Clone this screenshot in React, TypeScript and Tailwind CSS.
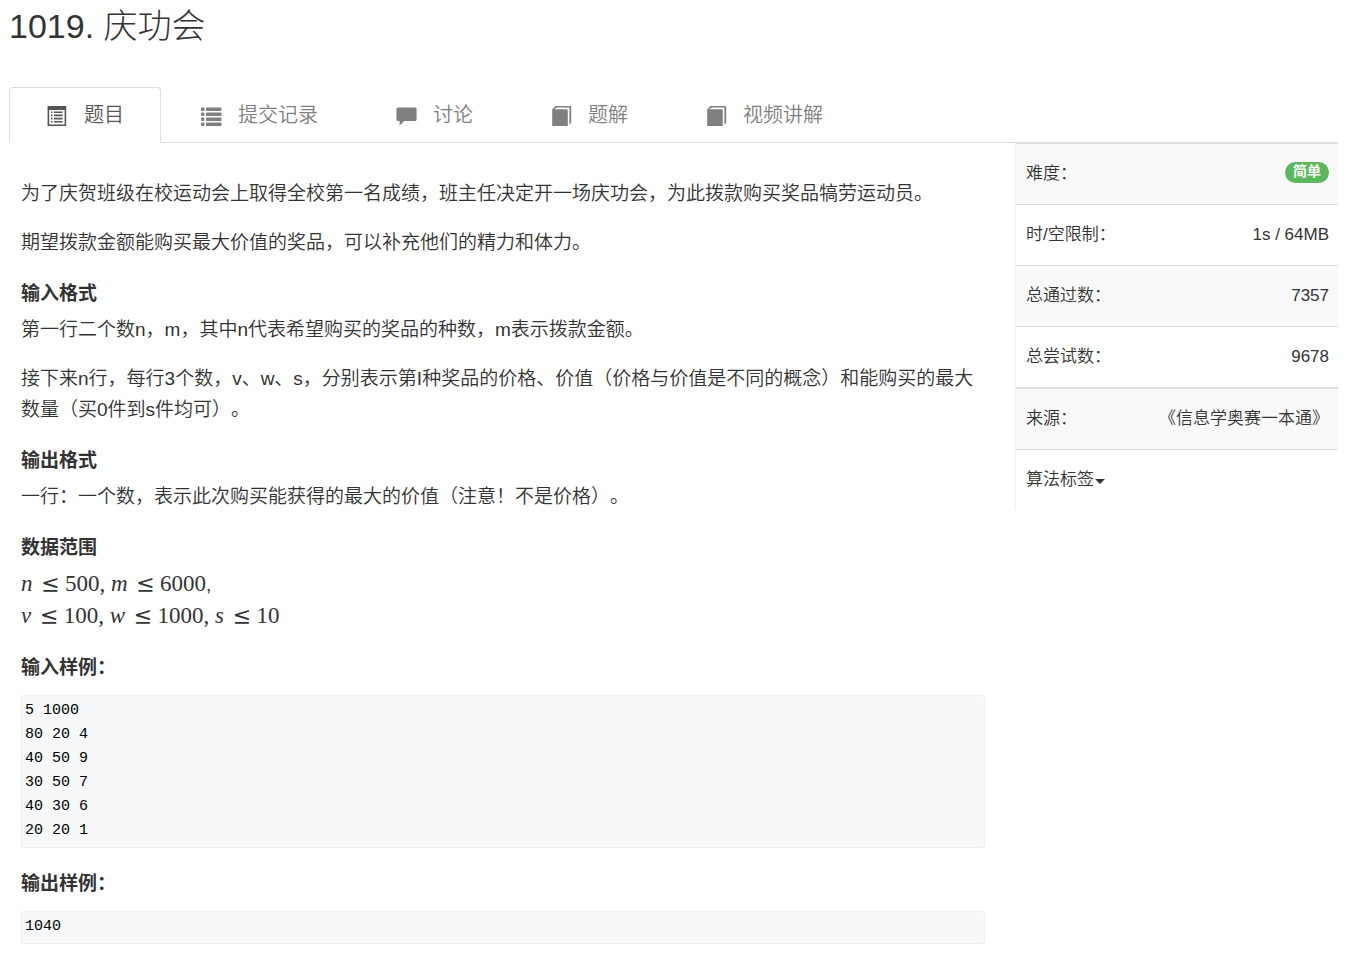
import type { ReactNode } from "react";

const sans = "font-['Liberation_Sans','Noto_Sans_CJK_SC',sans-serif]";
const mono = "font-['Liberation_Mono','Noto_Sans_CJK_SC',monospace]";
const serif = "font-['Liberation_Serif','Noto_Sans_CJK_SC',serif]";

function ListAltIcon() {
  return (
    <svg width="20" height="20" viewBox="0 0 20 20" fill="currentColor" aria-hidden="true">
      <path fillRule="evenodd" d="M.6 0h18.6v20H.6zM2.2 4v14.4h15.4V4z" />
      <path d="M4 5.4h1.6V7H4zM7 5.4h8.6V7H7zM4 8.6h1.6v1.6H4zM7 8.6h8.6v1.6H7zM4 11.8h1.6v1.6H4zM7 11.8h8.6v1.6H7zM4 15h1.6v1.6H4zM7 15h8.6v1.6H7z" />
    </svg>
  );
}

function ListIcon() {
  const rows = [1.6, 6.6, 11.6, 16.6];
  return (
    <svg width="21" height="20" viewBox="0 0 21 20" fill="currentColor" aria-hidden="true">
      {rows.map((y) => (
        <g key={y}>
          <rect x="0" y={y} width="3.4" height="3.4" rx=".8" />
          <rect x="5" y={y} width="15.4" height="3.4" rx=".6" />
        </g>
      ))}
    </svg>
  );
}

function CommentIcon() {
  return (
    <svg width="21" height="20" viewBox="0 0 21 20" fill="currentColor" aria-hidden="true">
      <path d="M2 1.4h17a1.6 1.6 0 0 1 1.6 1.6v10.4a1.6 1.6 0 0 1-1.6 1.6H8.2l-4.6 4.6V15H2a1.6 1.6 0 0 1-1.6-1.6V3A1.6 1.6 0 0 1 2 1.4z" />
    </svg>
  );
}

function BookIcon() {
  return (
    <svg width="21" height="20" viewBox="0 0 21 20" fill="currentColor" aria-hidden="true">
      <path d="M4.4 0H19a1.2 1.2 0 0 1 1.2 1.2V17l-1.8 1.4V1.5H6L3.2 3.3h12.2a1.4 1.4 0 0 1 1.4 1.4V20H1.2V3.4z" />
    </svg>
  );
}

const tabs: { label: string; icon: ReactNode; active?: boolean }[] = [
  { label: "题目", icon: <ListAltIcon />, active: true },
  { label: "提交记录", icon: <ListIcon /> },
  { label: "讨论", icon: <CommentIcon /> },
  { label: "题解", icon: <BookIcon /> },
  { label: "视频讲解", icon: <BookIcon /> },
];

function Tabs() {
  return (
    <nav className="flex gap-[2px] border-b border-[#ddd]">
      {tabs.map((t) => (
        <a
          key={t.label}
          href="#"
          className={
            t.active
              ? "-mb-px flex h-14 items-center rounded-t border border-b-white border-[#ddd] bg-white pr-9 pl-[37px] text-xl text-[#555]"
              : "-mb-px flex h-14 items-center border border-transparent px-[37px] text-xl text-[#808080]"
          }
        >
          <span className="mt-[2px] flex w-[21px] shrink-0">{t.icon}</span>
          <span className="ml-4">{t.label}</span>
        </a>
      ))}
    </nav>
  );
}

function Heading({ children }: { children: ReactNode }) {
  return <h4 className="mt-[25px] mb-[10px] text-[19px] leading-[21px] font-bold">{children}</h4>;
}

function SampleHeading({ children }: { children: ReactNode }) {
  return <h4 className="mt-[25px] mb-[17px] text-[19px] leading-[21px] font-bold">{children}</h4>;
}

function Para({ children }: { children: ReactNode }) {
  return <p className="mb-[18px] text-[19px] leading-[31px]">{children}</p>;
}

function Sample({ children }: { children: string }) {
  return (
    <pre className={`rounded-[3px] border border-[#eee] bg-[#f6f8fa] px-[3px] pt-[3px] pb-1 text-[15px] leading-6 text-black ${mono}`}>
      {children}
    </pre>
  );
}

function Var({ children }: { children: string }) {
  return <i className="mr-px">{children}</i>;
}

function Le() {
  return <span className="mr-[6px] ml-2 font-['DejaVu_Math_TeX_Gyre','DejaVu_Serif',serif] text-[22px] leading-none">≤</span>;
}

function Row({ label, children }: { label: string; children: ReactNode }) {
  return (
    <tr className="h-[61px] odd:bg-[#f9f9f9]">
      <th scope="row" className="border-t border-[#ddd] pl-[10px] text-left font-[350]">{label}</th>
      <td className="border-t border-[#ddd] pr-[9px] text-right">{children}</td>
    </tr>
  );
}

export default function App() {
  return (
    <div className={`pr-[14px] pb-[14px] pl-[9px] font-[350] text-[#333] ${sans}`}>
      <h1 className="pt-[7px] text-[34px] leading-[38px] font-light">1019. 庆功会</h1>
      <div className="mt-[42px]">
        <Tabs />
      </div>
      <div className="flex items-start">
        <main className="min-w-0 flex-1 pt-[35px] pr-[30px] pl-3 [text-spacing-trim:space-all]">
          <Para>为了庆贺班级在校运动会上取得全校第一名成绩，班主任决定开一场庆功会，为此拨款购买奖品犒劳运动员。</Para>
          <Para>期望拨款金额能购买最大价值的奖品，可以补充他们的精力和体力。</Para>
          <Heading>输入格式</Heading>
          <Para>第一行二个数n，m，其中n代表希望购买的奖品的种数，m表示拨款金额。</Para>
          <Para>接下来n行，每行3个数，v、w、s，分别表示第I种奖品的价格、价值（价格与价值是不同的概念）和能购买的最大数量（买0件到s件均可）。</Para>
          <Heading>输出格式</Heading>
          <Para>一行：一个数，表示此次购买能获得的最大的价值（注意！不是价格）。</Para>
          <Heading>数据范围</Heading>
          <Para>
            <span className={`text-[23px] font-normal ${serif}`}>
              <Var>n</Var><Le />500, <Var>m</Var><Le />6000
            </span>
            ,
            <br />
            <span className={`text-[23px] font-normal ${serif}`}>
              <Var>v</Var><Le />100, <Var>w</Var><Le />1000, <Var>s</Var><Le />10
            </span>
          </Para>
          <SampleHeading>输入样例：</SampleHeading>
          <Sample>{"5 1000\n80 20 4\n40 50 9\n30 50 7\n40 30 6\n20 20 1"}</Sample>
          <SampleHeading>输出样例：</SampleHeading>
          <Sample>1040</Sample>
        </main>
        <aside className="w-[323px] shrink-0 border-l border-[#eee] text-[17px]">
          <table className="w-full border-separate border-spacing-0 border-b border-[#ddd]">
            <tbody>
              <Row label="难度：">
                <span className="mb-[3px] ml-auto block w-fit rounded-full bg-[#5cb85c] px-2 pb-[2px] text-sm leading-[19px] font-bold text-white">简单</span>
              </Row>
              <Row label="时/空限制：">1s / 64MB</Row>
              <Row label="总通过数：">7357</Row>
              <Row label="总尝试数：">9678</Row>
            </tbody>
          </table>
          <table className="w-full border-separate border-spacing-0">
            <tbody>
              <Row label="来源：">《信息学奥赛一本通》</Row>
            </tbody>
          </table>
          <div className="flex h-[61px] items-center border-t border-[#ddd] pl-[10px]">
            <button type="button" className="flex items-center">
              算法标签
              <svg width="10" height="5" viewBox="0 0 10 5" fill="currentColor" className="mt-[2px] ml-px" aria-hidden="true">
                <path d="M0 0h10L5 5z" />
              </svg>
            </button>
          </div>
        </aside>
      </div>
    </div>
  );
}
